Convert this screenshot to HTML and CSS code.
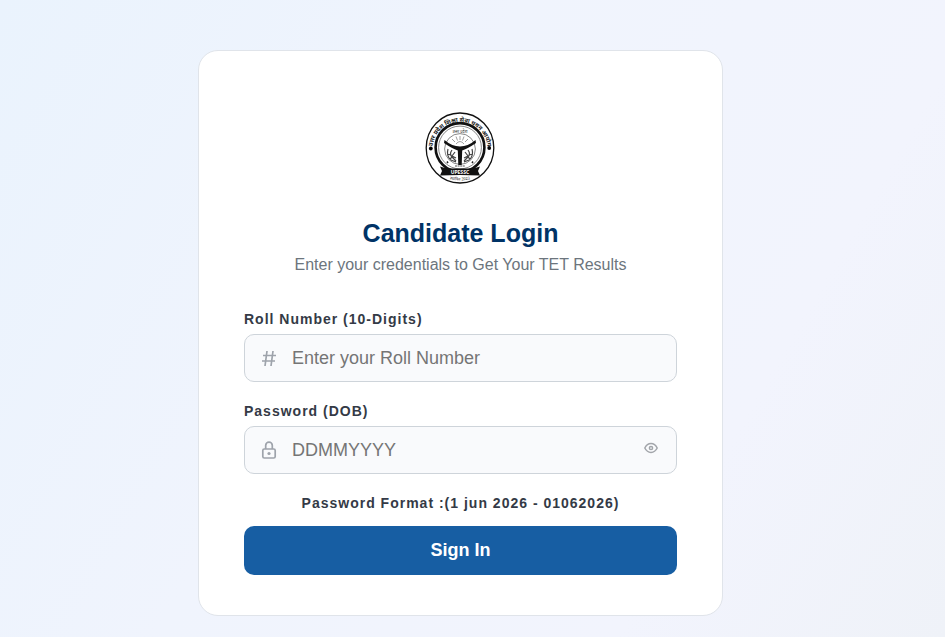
FILE: index.html
```html
<!DOCTYPE html>
<html lang="en">
<head>
<meta charset="utf-8">
<meta name="viewport" content="width=device-width, initial-scale=1">
<title>Candidate Login</title>
<link rel="stylesheet" href="styles.css">
</head>
<body>
<main class="card">
  <header class="header">
    <svg class="logo" viewBox="1 0 72 72" role="img" aria-label="UPESSC">
      <defs>
        <path id="outer-arc" d="M8.400 38a27.600 28.200 0 0 1 55.200 0"/>
        <path id="lower-arc" d="M20 65.500Q36 71.500 52 65.500"/>
      </defs>
      <ellipse cx="36" cy="36" rx="33.800" ry="35" fill="#fff" stroke="#111" stroke-width="1.300"/>
      <circle cx="36" cy="35.500" r="24.400" fill="none" stroke="#111" stroke-width="2.600"/>
      <circle cx="36" cy="35.500" r="21.400" fill="none" stroke="#555" stroke-width=".7"/>
      <circle cx="36" cy="37" r="15.400" fill="none" stroke="#555" stroke-width=".7"/>
      <text class="logo-ring"><textPath href="#outer-arc" startOffset="50%">उत्तर प्रदेश शिक्षा सेवा चयन आयोग</textPath></text>
      <text class="logo-inner" x="36" y="21">उत्तर प्रदेश</text>
      <circle cx="6.800" cy="36.500" r="1.900"/>
      <circle cx="65.200" cy="36" r="1.900"/>
      <path d="M31 30l-3-3M33.500 28.500l-1.500-4M36 28v-4M38.500 28.500l1.500-4M41 30l3-3M32 32q4-5 8 0" fill="none" stroke="#777" stroke-width=".7"/>
      <path d="M20.500 28Q28 34.500 36 34.500Q44 34.500 51.500 28L52 31Q44 36.500 38.200 38.500L37.700 53H34.300L33.800 38.500Q28 36.500 20 31Z" fill="#111"/>
      <g fill="none" stroke="#444" stroke-width="1.200">
        <path d="M24 37q-2 7 3 11l5 2M28 38q-3 4 0 7l4 4M23 42l4 1M26 47l3-3M31 40l-3 4 4 2"/>
        <path d="M48 37q2 7-3 11l-5 2M44 38q3 4 0 7l-4 4M49 42l-4 1M46 47l-3-3M41 40l3 4-4 2"/>
      </g>
      <path d="M23 49.500l1 1.500M49 49.500l-1 1.500" stroke="#222" stroke-width="1.500"/>
      <path d="M31 54h10" stroke="#555" stroke-width="1.200" stroke-dasharray="2 .6"/>
      <path d="M16 54.500l5 1.500Q36 57 51 56L56 54.500l-2 4.500 2 4.500Q36 62.500 16 63.500l2-4.500Z" fill="#111"/>
      <text class="logo-name" x="36" y="61.500">UPESSC</text>
      <text class="logo-lower"><textPath href="#lower-arc" startOffset="50%">स्थापित 2023</textPath></text>
    </svg>
    <h1 class="title">Candidate Login</h1>
    <p class="subtitle">Enter your credentials to Get Your TET Results</p>
  </header>
  <form class="form">
    <label class="label" for="roll">Roll Number (10-Digits)</label>
    <div class="field">
      <svg class="field-icon" viewBox="0 0 16 18" aria-hidden="true">
        <path d="M6 2L4 17M12 2L10 17M2 6.500h13M1 12h13"/>
      </svg>
      <input class="input" id="roll" type="text" inputmode="numeric" maxlength="10" placeholder="Enter your Roll Number">
    </div>
    <label class="label" for="password">Password (DOB)</label>
    <div class="field">
      <svg class="field-icon" viewBox="0 0 16 18" aria-hidden="true">
        <rect x="1.800" y="8" width="12.400" height="9" rx="1.500"/>
        <path d="M4.700 8V4.500a3.300 3.300 0 0 1 6.600 0V8"/>
        <circle class="dot" cx="8" cy="12.500" r="1.600"/>
      </svg>
      <input class="input" id="password" type="password" placeholder="DDMMYYYY">
      <button class="toggle" type="button" aria-label="Show password">
        <svg class="eye" viewBox="0 0 14 12" aria-hidden="true">
          <path d="M.8 6Q3 1.600 7 1.600T13.200 6Q11 10.400 7 10.400T.8 6Z"/>
          <circle cx="7" cy="6" r="1.600"/>
        </svg>
      </button>
    </div>
    <p class="hint">Password Format :(1 jun 2026 - 01062026)</p>
    <button class="submit" type="submit">Sign In</button>
  </form>
</main>
</body>
</html>
```
FILE: styles.css
```css
* {
  box-sizing: border-box;
}

body {
  margin: 0;
  min-height: 100vh;
  padding: 50px 24px 20px 0;
  font-family: "Liberation Sans", Arial, sans-serif;
  background: linear-gradient(120deg, #eaf3fd 0%, #f0f4fd 40%, #f2f4fd 75%, #eff2f8 100%);
}

.card {
  width: 100%;
  max-width: 525px;
  margin: 0 auto;
  padding: 40px 45px;
  background: #fff;
  border: 1px solid #e0e4ea;
  border-radius: 20px;
}

.header {
  display: flex;
  flex-direction: column;
  align-items: center;
  padding-top: 21px;
  margin-bottom: 35px;
  text-align: center;
}

.logo {
  width: 72px;
  height: 72px;
  margin-bottom: 34px;
}

.logo text {
  font-family: "Noto Sans Devanagari", "Noto Sans", "Liberation Sans", sans-serif;
  fill: #222;
  text-anchor: middle;
}

.logo .logo-ring {
  font-size: 6px;
  font-weight: 700;
}

.logo .logo-inner,
.logo .logo-lower {
  font-size: 4px;
}

.logo .logo-name {
  font-size: 5px;
  font-weight: 700;
  fill: #fff;
}

.title {
  margin: 0 0 6px;
  font-size: 25px;
  line-height: 30px;
  color: #003366;
}

.subtitle {
  margin: 0;
  font-size: 16px;
  line-height: 21px;
  color: #6c757d;
}

.form {
  display: flex;
  flex-direction: column;
}

.label,
.hint {
  font-size: 14px;
  font-weight: 700;
  line-height: 18px;
  letter-spacing: 1px;
  color: #343a46;
}

.label {
  margin-bottom: 6px;
}

.field {
  display: flex;
  align-items: center;
  height: 48px;
  margin-bottom: 20px;
  padding: 0 16px;
  background: #f9fafc;
  border: 1px solid #ced4da;
  border-radius: 10px;
}

.field:focus-within {
  border-color: #175ea3;
}

.field-icon {
  flex: none;
  width: 16px;
  height: 18px;
  margin-right: 15px;
  fill: none;
  stroke: #9ea3ab;
  stroke-width: 1.7;
}

.field-icon .dot {
  fill: #9ea3ab;
  stroke: none;
}

.input {
  flex: 1;
  min-width: 0;
  padding: 0;
  font: inherit;
  font-size: 18px;
  color: #343a46;
  background: none;
  border: 0;
  outline: 0;
}

.input::placeholder {
  color: #757575;
  opacity: 1;
}

.toggle {
  display: flex;
  align-items: center;
  padding: 0 2px 4px;
  background: none;
  border: 0;
  cursor: pointer;
}

.eye {
  width: 14px;
  height: 12px;
  fill: none;
  stroke: #a2a5aa;
  stroke-width: 1.5;
}

.hint {
  margin: 0 0 14px;
  text-align: center;
}

.submit {
  padding: 14px;
  font: inherit;
  font-size: 18px;
  font-weight: 700;
  line-height: 21px;
  color: #fff;
  background: #175ea3;
  border: 0;
  border-radius: 10px;
  cursor: pointer;
}
```
